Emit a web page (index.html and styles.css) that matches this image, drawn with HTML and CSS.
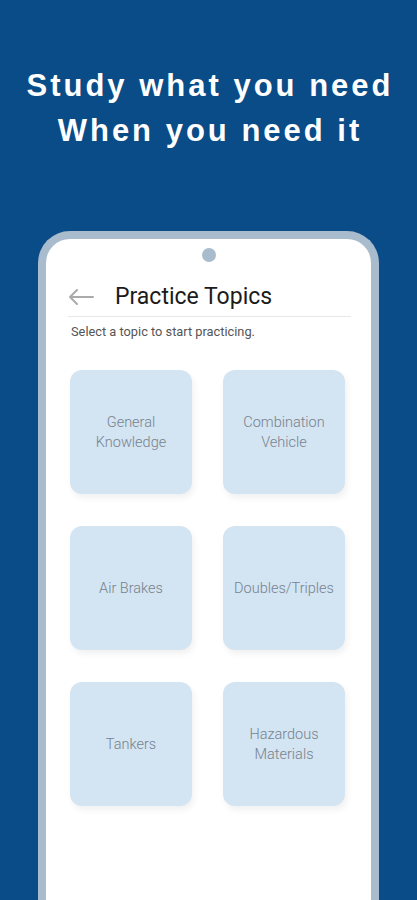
FILE: index.html
```html
<!DOCTYPE html>
<html lang="en">
<head>
  <meta charset="UTF-8" />
  <meta name="viewport" content="width=device-width, initial-scale=1.0" />
  <title>Practice Topics</title>
  <link rel="stylesheet" href="styles.css">
</head>
<body>
  <header class="hero">
    <h1>Study what you need<br>When you need it</h1>
  </header>

  <div class="phone">
    <div class="camera"></div>

    <div class="top-bar">
      <svg class="back" width="26" height="16" viewBox="0 0 26 16">
        <path d="M25 8H2M9 1L2 8l7 7" fill="none" stroke="#ababab" stroke-width="2" stroke-linecap="round" stroke-linejoin="round"/>
      </svg>
      <h2>Practice Topics</h2>
    </div>
    <p class="hint">Select a topic to start practicing.</p>

    <div class="topics">
      <a class="topic" href="#">General<br>Knowledge</a>
      <a class="topic" href="#">Combination<br>Vehicle</a>
      <a class="topic" href="#">Air Brakes</a>
      <a class="topic" href="#">Doubles/Triples</a>
      <a class="topic" href="#">Tankers</a>
      <a class="topic" href="#">Hazardous<br>Materials</a>
    </div>
  </div>
</body>
</html>
```

FILE: styles.css
```css
body {
  margin: 0;
  height: 900px;
  overflow: hidden;
  font-family: Roboto, 'Liberation Sans', sans-serif;
  background-color: #0a4c87;
}

.hero {
  padding-top: 63px;
  text-align: center;
}

.hero h1 {
  margin: 0;
  padding-left: 3px;
  font-family: 'Liberation Sans', Arial, sans-serif;
  font-size: 31px;
  line-height: 45px;
  font-weight: bold;
  letter-spacing: 3px;
  color: #fff;
}

.phone {
  width: 325px;
  height: 700px;
  margin: 78px auto 0;
  background-color: #fff;
  border: 8px solid #a9bccd;
  border-bottom: none;
  border-radius: 32px 32px 0 0;
}

.camera {
  width: 14px;
  height: 14px;
  margin: 9px auto 0;
  border-radius: 50%;
  background-color: #a9bccd;
}

.top-bar {
  display: flex;
  align-items: center;
  gap: 21px;
  height: 39px;
  margin: 15px 20px 0 22px;
  border-bottom: 1px solid #e8e8e8;
}

.top-bar h2 {
  margin: 0;
  font-size: 23px;
  font-weight: normal;
  color: #1b1b1b;
}

.hint {
  margin: 7px 0 0 25px;
  font-size: 12.8px;
  line-height: 16px;
  color: #555;
}

.topics {
  display: grid;
  grid-template-columns: 122px 122px;
  grid-auto-rows: 124px;
  column-gap: 31px;
  row-gap: 32px;
  margin-top: 30px;
  padding-left: 24px;
}

.topic {
  display: flex;
  align-items: center;
  justify-content: center;
  padding-top: 2px;
  text-align: center;
  text-decoration: none;
  font-size: 14.5px;
  line-height: 20px;
  font-weight: 300;
  color: #77828d;
  background-color: #d3e4f2;
  border-radius: 12px;
  box-shadow: 2px 4px 6px rgba(0,0,0,0.06);
}
```
